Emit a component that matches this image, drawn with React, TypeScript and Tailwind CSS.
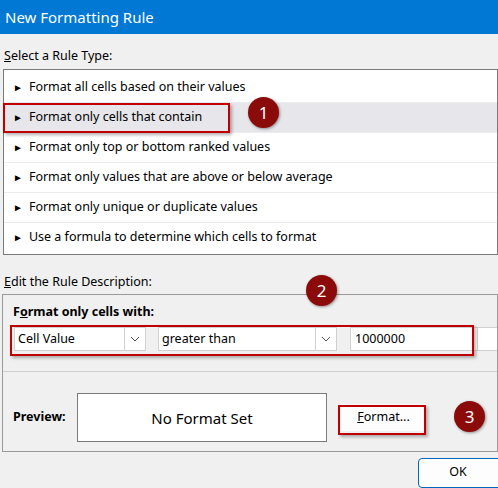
import React from 'react';

const rules = [
  'Format all cells based on their values',
  'Format only cells that contain',
  'Format only top or bottom ranked values',
  'Format only values that are above or below average',
  'Format only unique or duplicate values',
  'Use a formula to determine which cells to format',
];

const Badge: React.FC<{ n: number; className: string }> = ({ n, className }) => (
  <div
    className={`absolute flex h-[31px] w-[31px] items-center justify-center rounded-full bg-[#8b0a0a] text-[17px] text-white shadow-[1px_1px_3px_rgba(0,0,0,0.4)] ${className}`}
  >
    {n}
  </div>
);

const Chevron = () => (
  <svg width="10" height="6" viewBox="0 0 10 6" fill="none" stroke="#555" strokeWidth="1">
    <path d="M1 1l4 4 4-4" />
  </svg>
);

const App: React.FC = () => {
  return (
    <div
      className="relative h-[488px] w-[498px] overflow-hidden bg-[#f0f0f0] text-[12.5px] text-black"
      style={{ fontFamily: '"Noto Sans", "Open Sans", sans-serif' }}
    >
      <div className="flex h-[34px] items-center bg-[#0078d4] pl-[5px] text-[15px] text-white">
        New Formatting Rule
      </div>

      <div className="mt-[13px] pl-[4px]">
        <span className="underline">S</span>elect a Rule Type:
      </div>
      <div className="ml-[3px] mt-[3px] border border-[#7a7a7a] bg-white pb-[1px] pt-[3px]">
        {rules.map((r, i) => (
          <div
            key={r}
            className={`flex h-[30px] items-center gap-[6px] pl-[9px] ${i === 1 ? 'bg-[#e6e6eb]' : ''} ${i < 5 ? 'border-b border-[#ececec]' : ''}`}
          >
            <span className="text-[10px]">►</span>
            {r}
          </div>
        ))}
      </div>

      <div className="mt-[18px] pl-[4px]">
        <span className="underline">E</span>dit the Rule Description:
      </div>
      <div className="ml-[2px] mt-[2px] h-[158px] border border-[#9a9a9a] bg-[#f0f0f0]">
        <div className="pl-[10px] pt-[8px] font-bold">
          F<span className="underline">o</span>rmat only cells with:
        </div>
        <div className="mt-[6px] flex items-center pl-[11px]">
          <div className="flex h-[24px] w-[132px] items-center justify-between border border-[#d0d0d0] bg-white pl-[3px]">
            Cell Value
            <div className="flex h-[22px] w-[21px] items-center justify-center border-l border-[#d0d0d0]">
              <Chevron />
            </div>
          </div>
          <div className="ml-[12px] flex h-[24px] w-[179px] items-center justify-between border border-[#d0d0d0] bg-white pl-[3px]">
            greater than
            <div className="flex h-[22px] w-[21px] items-center justify-center border-l border-[#d0d0d0]">
              <Chevron />
            </div>
          </div>
          <div className="ml-[13px] flex h-[24px] w-[128px] items-center border border-[#d0d0d0] bg-white pl-[4px]">
            1000000
          </div>
          <div className="h-[24px] flex-1 border-y border-[#d0d0d0] bg-white" />
        </div>
        <div className="mt-[20px] h-px bg-[#cfcfcf]" />
        <div className="mt-[21px] flex items-center pl-[10px]">
          <div className="w-[64px] font-bold">Preview:</div>
          <div className="flex h-[49px] w-[250px] items-center justify-center border border-[#7a7a7a] bg-white text-[15px]">
            No Format Set
          </div>
          <div className="ml-[14px] flex h-[27px] w-[85px] items-center justify-center bg-[#fdfdfd]">
            <span className="underline">F</span>ormat...
          </div>
        </div>
      </div>

      <div className="mr-[-6px] mt-[6px] flex justify-end">
        <div className="flex h-[30px] w-[86px] items-center justify-center rounded-[4px] border border-[#0067c0] bg-[#fdfdfd] pr-[6px]">
          OK
        </div>
      </div>

      <div className="absolute left-[3px] top-[103px] h-[30px] w-[227px] border-2 border-[#c00000] shadow-[2px_2px_3px_rgba(0,0,0,0.3)]" />
      <div className="absolute left-[10px] top-[325px] h-[31px] w-[464px] border-2 border-[#c00000] shadow-[2px_2px_3px_rgba(0,0,0,0.3)]" />
      <div className="absolute left-[338px] top-[405px] h-[30px] w-[88px] border-2 border-[#c00000] shadow-[2px_2px_3px_rgba(0,0,0,0.3)]" />
      <Badge n={1} className="left-[248px] top-[97px]" />
      <Badge n={2} className="left-[306px] top-[275px]" />
      <Badge n={3} className="left-[454px] top-[401px]" />
    </div>
  );
};

export default App;
